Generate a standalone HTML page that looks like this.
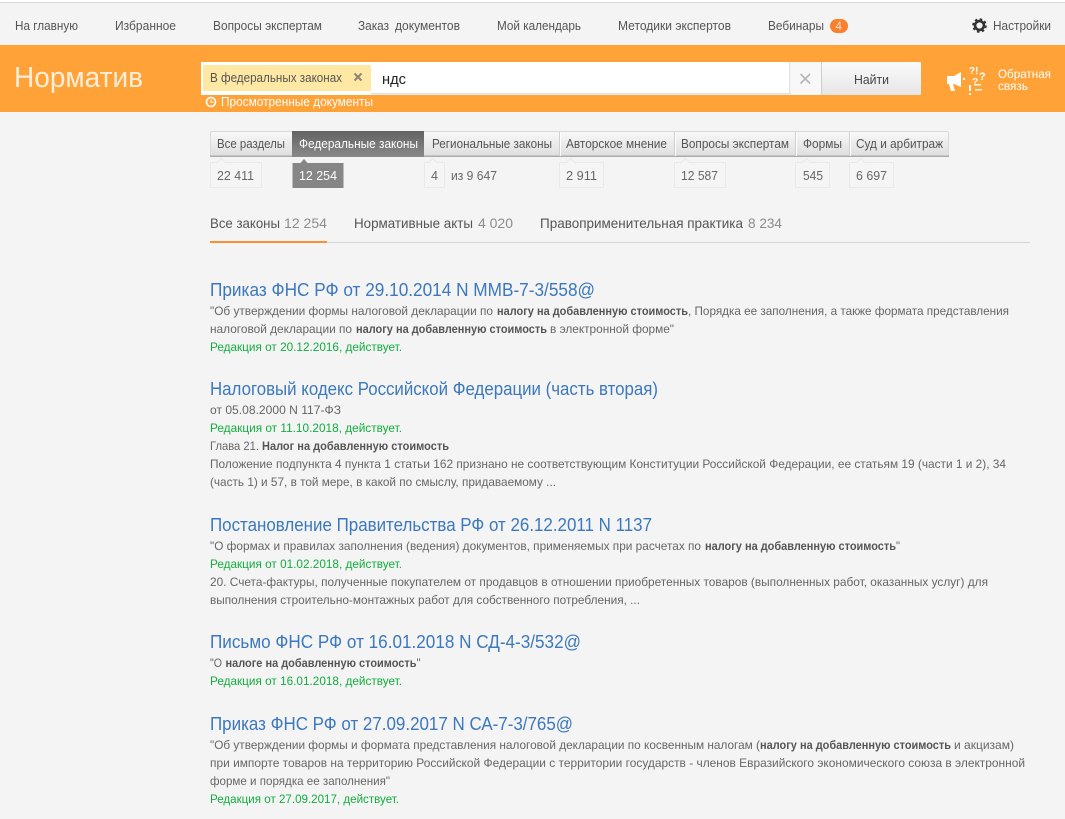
<!DOCTYPE html>
<html lang="ru"><head><meta charset="utf-8"><title>Норматив</title>
<style>
html,body{margin:0;padding:0;background:#f4f4f4;width:1065px;height:819px;overflow:hidden}
svg{display:block;position:absolute;left:0;top:0}
text{font-family:"Liberation Sans","DejaVu Sans",sans-serif;font-size:12px;fill:#666}
.n{font-size:13px;fill:#555}
.t{font-size:18px;fill:#3b78bd}
.b{font-weight:bold;fill:#555}
.g{fill:#12ad3e}
.s{font-size:14px;fill:#555}
.c{font-size:14px;fill:#8c8c8c}
.w{fill:#fff}
.a{font-size:12.5px;fill:#555}
.k{font-size:12.5px;fill:#666}
</style></head><body>
<svg width="1065" height="819" viewBox="0 0 1065 819" xmlns="http://www.w3.org/2000/svg">
<defs>
<linearGradient id="tab" x1="0" y1="0" x2="0" y2="1"><stop offset="0" stop-color="#f8f8f8"/><stop offset="1" stop-color="#dedede"/></linearGradient>
<linearGradient id="act" x1="0" y1="0" x2="0" y2="1"><stop offset="0" stop-color="#626262"/><stop offset="1" stop-color="#8a8a8a"/></linearGradient>
<linearGradient id="btn" x1="0" y1="0" x2="0" y2="1"><stop offset="0" stop-color="#fafafa"/><stop offset="1" stop-color="#e6e6e6"/></linearGradient>
</defs>
<rect width="1065" height="819" fill="#f4f4f4"/>
<rect width="1065" height="2" fill="#fff"/>
<rect y="2" width="1065" height="1" fill="#d6d6d6"/>

<!-- top nav -->
<text class="n" x="15" y="30" textLength="63" lengthAdjust="spacingAndGlyphs">На главную</text>
<text class="n" x="115" y="30" textLength="61" lengthAdjust="spacingAndGlyphs">Избранное</text>
<text class="n" x="213" y="30" textLength="109" lengthAdjust="spacingAndGlyphs">Вопросы экспертам</text>
<text class="n" x="358" y="30" textLength="31" lengthAdjust="spacingAndGlyphs">Заказ</text>
<text class="n" x="395" y="30" textLength="65" lengthAdjust="spacingAndGlyphs">документов</text>
<text class="n" x="497" y="30" textLength="84" lengthAdjust="spacingAndGlyphs">Мой календарь</text>
<text class="n" x="618" y="30" textLength="113" lengthAdjust="spacingAndGlyphs">Методики экспертов</text>
<text class="n" x="768" y="30" textLength="56" lengthAdjust="spacingAndGlyphs">Вебинары</text>
<rect x="830" y="19" width="18" height="14" rx="7" fill="#f8802e"/>
<text x="835.5" y="30" style="font-size:11.5px;fill:#ffe3c8">4</text>
<circle cx="979.5" cy="25.5" r="4.4" fill="none" stroke="#333" stroke-width="2.6"/>
<circle cx="979.5" cy="25.5" r="6.3" fill="none" stroke="#333" stroke-width="2" stroke-dasharray="2.5 2.45"/>
<text class="n" x="993" y="30" textLength="58" lengthAdjust="spacingAndGlyphs">Настройки</text>

<!-- orange header -->
<rect y="45" width="1065" height="67" fill="#ffa238"/>
<text x="14" y="87" textLength="129" lengthAdjust="spacingAndGlyphs" style="font-size:29px;fill:#ffeeda">Норматив</text>
<rect x="201" y="62" width="590" height="33" fill="#fff"/>
<rect x="371" y="93" width="420" height="1.5" fill="#dedede"/>
<rect x="789" y="62" width="1.5" height="32" fill="#e4e4e4"/>
<rect x="791" y="62" width="31" height="33" fill="#f8f8f8"/>
<rect x="203" y="65" width="168" height="26" rx="1" fill="#ffe8a4"/>
<text x="210" y="82" textLength="132" lengthAdjust="spacingAndGlyphs" style="font-size:12.5px;fill:#555">В федеральных законах</text>
<path d="M354.5 73.5l7 7m0-7l-7 7" stroke="#8a8578" stroke-width="2" fill="none"/>
<text x="382" y="84" textLength="24" lengthAdjust="spacingAndGlyphs" style="font-size:15px;fill:#222">ндс</text>
<path d="M800.500 74l9.500 9.500m0-9.500l-9.500 9.500" stroke="#b5b5b5" stroke-width="1.6" fill="none"/>
<rect x="822" y="62" width="99" height="33" rx="1" fill="url(#btn)"/>
<rect x="821" y="62" width="1" height="33" fill="#cfcfcf"/>
<text x="854" y="84" textLength="35" lengthAdjust="spacingAndGlyphs" style="font-size:13px;fill:#444">Найти</text>
<circle cx="211" cy="102" r="4.5" fill="none" stroke="#fff" stroke-width="1.6"/>
<path d="M211 99.500v2.800h2.500" stroke="#fff" stroke-width="1" fill="none"/>
<text x="221" y="106" textLength="152" lengthAdjust="spacingAndGlyphs" style="font-size:12.5px;fill:#fff">Просмотренные документы</text>

<!-- feedback icon -->
<path d="M947 76h7l7-4v15l-7-3h-1l2 7h-4l-2-7h-2z" fill="#fff"/>
<rect x="963" y="78" width="2" height="2" fill="#fff"/>
<text x="969" y="74" class="b" style="font-size:10px;fill:#fff">?!</text>
<text x="972" y="85" class="b" style="font-size:10px;fill:#fff">?</text>
<text x="979" y="80" class="b" style="font-size:11px;fill:#fff">?</text>
<rect x="974" y="84" width="7" height="1.500" fill="#fff" opacity=".85"/>
<rect x="969" y="85" width="2" height="6" fill="#fff"/>
<rect x="969" y="93" width="2" height="2" fill="#fff"/>
<rect x="975" y="89" width="7" height="1.500" fill="#fff" opacity=".85"/>
<text class="w" x="998" y="78" textLength="53" lengthAdjust="spacingAndGlyphs">Обратная</text>
<text class="w" x="998" y="90" textLength="30" lengthAdjust="spacingAndGlyphs">связь</text>

<!-- section tabs -->
<rect x="210.500" y="131.500" width="738" height="25" rx="2" fill="url(#tab)" stroke="#d8d8d8"/>
<rect x="210" y="155.500" width="739" height="1.500" fill="#ababab"/>
<rect x="292" y="131" width="132" height="26" fill="url(#act)"/>
<path d="M560.500 132v24M675.500 132v24M796.500 132v24M850.500 132v24" stroke="#fff" stroke-width="1"/>
<path d="M559.500 132v24M674.500 132v24M795.500 132v24M849.500 132v24" stroke="#cfcfcf" stroke-width="1"/>
<text class="a" x="217" y="148" textLength="68" lengthAdjust="spacingAndGlyphs">Все разделы</text>
<text class="a" x="299" y="148" textLength="119" lengthAdjust="spacingAndGlyphs" style="fill:#fff">Федеральные законы</text>
<text class="a" x="432" y="148" textLength="120" lengthAdjust="spacingAndGlyphs">Региональные законы</text>
<text class="a" x="566" y="148" textLength="101" lengthAdjust="spacingAndGlyphs">Авторское мнение</text>
<text class="a" x="681" y="148" textLength="108" lengthAdjust="spacingAndGlyphs">Вопросы экспертам</text>
<text class="a" x="803" y="148" textLength="39" lengthAdjust="spacingAndGlyphs">Формы</text>
<text class="a" x="856" y="148" textLength="87" lengthAdjust="spacingAndGlyphs">Суд и арбитраж</text>

<!-- counts -->
<g fill="#f5f5f5" stroke="#e9e9e9">
<path d="M210.500 162.500h7l4-4 4 4h36v25h-51z"/>
<path d="M424.500 162.500h4l4-4 4 4h8v25h-20z"/>
<path d="M559.500 162.500h7l4-4 4 4h29v25h-44z"/>
<path d="M674.500 162.500h7l4-4 4 4h36v25h-51z"/>
<path d="M795.500 162.500h7l4-4 4 4h19v25h-34z"/>
<path d="M849.500 162.500h7l4-4 4 4h29v25h-44z"/>
</g>
<path d="M292.500 163h8l3.500-4 3.500 4h36v25h-51z" fill="#868686"/>
<text class="k" x="217" y="180" textLength="37" lengthAdjust="spacingAndGlyphs">22 411</text>
<text class="k" x="299" y="180" textLength="38" lengthAdjust="spacingAndGlyphs" style="fill:#fff">12 254</text>
<text class="k" x="431" y="180" textLength="7" lengthAdjust="spacingAndGlyphs">4</text>
<text class="k" x="451" y="180" textLength="46" lengthAdjust="spacingAndGlyphs">из 9 647</text>
<text class="k" x="566" y="180" textLength="31" lengthAdjust="spacingAndGlyphs">2 911</text>
<text class="k" x="681" y="180" textLength="37" lengthAdjust="spacingAndGlyphs">12 587</text>
<text class="k" x="803" y="180" textLength="20" lengthAdjust="spacingAndGlyphs">545</text>
<text class="k" x="856" y="180" textLength="31" lengthAdjust="spacingAndGlyphs">6 697</text>

<!-- sub tabs -->
<text class="s" x="210" y="228" textLength="70" lengthAdjust="spacingAndGlyphs">Все законы</text>
<text class="c" x="284" y="228" textLength="43" lengthAdjust="spacingAndGlyphs">12 254</text>
<text class="s" x="354" y="228" textLength="119" lengthAdjust="spacingAndGlyphs">Нормативные акты</text>
<text class="c" x="478" y="228" textLength="35" lengthAdjust="spacingAndGlyphs">4 020</text>
<text class="s" x="540" y="228" textLength="203" lengthAdjust="spacingAndGlyphs">Правоприменительная практика</text>
<text class="c" x="748" y="228" textLength="34" lengthAdjust="spacingAndGlyphs">8 234</text>
<rect x="210" y="242" width="820" height="1" fill="#d4d4d4"/>
<rect x="210" y="241" width="117" height="2" fill="#ff8d36"/>

<!-- result 1 -->
<text class="t" x="210" y="296" textLength="385" lengthAdjust="spacingAndGlyphs">Приказ ФНС РФ от 29.10.2014 N ММВ-7-3/558@</text>
<text x="210" y="315" textLength="283" lengthAdjust="spacingAndGlyphs">"Об утверждении формы налоговой декларации по</text>
<text class="b" x="497" y="315" textLength="191" lengthAdjust="spacingAndGlyphs">налогу на добавленную стоимость</text>
<text x="688" y="315" textLength="321" lengthAdjust="spacingAndGlyphs">, Порядка ее заполнения, а также формата представления</text>
<text x="210" y="333" textLength="142" lengthAdjust="spacingAndGlyphs">налоговой декларации по</text>
<text class="b" x="356" y="333" textLength="191" lengthAdjust="spacingAndGlyphs">налогу на добавленную стоимость</text>
<text x="550" y="333" textLength="124" lengthAdjust="spacingAndGlyphs">в электронной форме"</text>
<text class="g" x="210" y="351" textLength="192" lengthAdjust="spacingAndGlyphs">Редакция от 20.12.2016, действует.</text>

<!-- result 2 -->
<text class="t" x="210" y="395" textLength="448" lengthAdjust="spacingAndGlyphs">Налоговый кодекс Российской Федерации (часть вторая)</text>
<text x="210" y="414" textLength="131" lengthAdjust="spacingAndGlyphs">от 05.08.2000 N 117-ФЗ</text>
<text class="g" x="210" y="432" textLength="192" lengthAdjust="spacingAndGlyphs">Редакция от 11.10.2018, действует.</text>
<text x="210" y="450" textLength="49" lengthAdjust="spacingAndGlyphs">Глава 21.</text>
<text class="b" x="262" y="450" textLength="187" lengthAdjust="spacingAndGlyphs">Налог на добавленную стоимость</text>
<text x="210" y="468" textLength="796" lengthAdjust="spacingAndGlyphs">Положение подпункта 4 пункта 1 статьи 162 признано не соответствующим Конституции Российской Федерации, ее статьям 19 (части 1 и 2), 34</text>
<text x="210" y="486" textLength="346" lengthAdjust="spacingAndGlyphs">(часть 1) и 57, в той мере, в какой по смыслу, придаваемому ...</text>

<!-- result 3 -->
<text class="t" x="210" y="531" textLength="442" lengthAdjust="spacingAndGlyphs">Постановление Правительства РФ от 26.12.2011 N 1137</text>
<text x="210" y="550" textLength="491" lengthAdjust="spacingAndGlyphs">"О формах и правилах заполнения (ведения) документов, применяемых при расчетах по</text>
<text class="b" x="705" y="550" textLength="191" lengthAdjust="spacingAndGlyphs">налогу на добавленную стоимость</text>
<text x="896" y="550" textLength="4" lengthAdjust="spacingAndGlyphs">"</text>
<text class="g" x="210" y="568" textLength="192" lengthAdjust="spacingAndGlyphs">Редакция от 01.02.2018, действует.</text>
<text x="210" y="586" textLength="778" lengthAdjust="spacingAndGlyphs">20. Счета-фактуры, полученные покупателем от продавцов в отношении приобретенных товаров (выполненных работ, оказанных услуг) для</text>
<text x="210" y="604" textLength="430" lengthAdjust="spacingAndGlyphs">выполнения строительно-монтажных работ для собственного потребления, ...</text>

<!-- result 4 -->
<text class="t" x="210" y="648" textLength="371" lengthAdjust="spacingAndGlyphs">Письмо ФНС РФ от 16.01.2018 N СД-4-3/532@</text>
<text x="210" y="667" textLength="12" lengthAdjust="spacingAndGlyphs">"О</text>
<text class="b" x="225.500" y="667" textLength="191" lengthAdjust="spacingAndGlyphs">налоге на добавленную стоимость</text>
<text x="416.500" y="667" textLength="4" lengthAdjust="spacingAndGlyphs">"</text>
<text class="g" x="210" y="685" textLength="192" lengthAdjust="spacingAndGlyphs">Редакция от 16.01.2018, действует.</text>

<!-- result 5 -->
<text class="t" x="210" y="730" textLength="363" lengthAdjust="spacingAndGlyphs">Приказ ФНС РФ от 27.09.2017 N СА-7-3/765@</text>
<text x="210" y="749" textLength="550" lengthAdjust="spacingAndGlyphs">"Об утверждении формы и формата представления налоговой декларации по косвенным налогам (</text>
<text class="b" x="760" y="749" textLength="191" lengthAdjust="spacingAndGlyphs">налогу на добавленную стоимость</text>
<text x="954" y="749" textLength="60" lengthAdjust="spacingAndGlyphs">и акцизам)</text>
<text x="210" y="767" textLength="815" lengthAdjust="spacingAndGlyphs">при импорте товаров на территорию Российской Федерации с территории государств - членов Евразийского экономического союза в электронной</text>
<text x="210" y="785" textLength="180" lengthAdjust="spacingAndGlyphs">форме и порядка ее заполнения"</text>
<text class="g" x="210" y="803" textLength="189" lengthAdjust="spacingAndGlyphs">Редакция от 27.09.2017, действует.</text>
</svg>
</body></html>
